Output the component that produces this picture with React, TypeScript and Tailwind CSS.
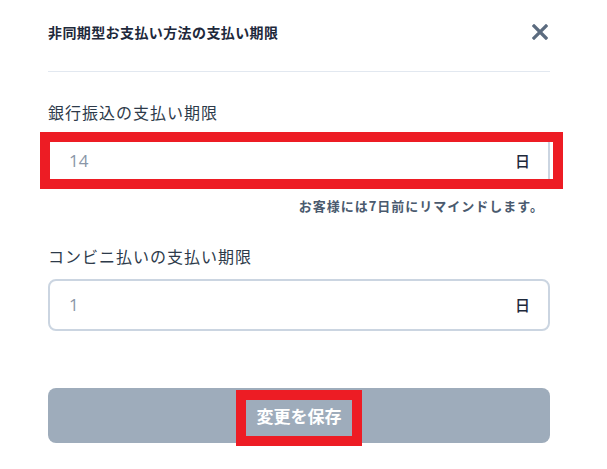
const jp = { fontFamily: '"Noto Sans CJK JP", "Noto Sans", sans-serif' };

function DaysField({ value, outlined }: { value: string; outlined?: boolean }) {
  return (
    <div className="relative">
      <div className="flex items-center h-[52px] rounded-lg border-2 border-[#cbd5e1] bg-white pl-[19px] pr-[18px]">
        <input
          readOnly
          defaultValue={value}
          className="flex-1 min-w-0 bg-transparent outline-none text-[17px] text-[#8a97a8]"
          style={{ fontFamily: '"Open Sans", "Noto Sans", sans-serif' }}
        />
        <span className="text-[15px] leading-5 font-medium text-[#1e293b]">日</span>
      </div>
      {outlined && (
        <div className="absolute -left-2 -top-[3px] -right-[13px] -bottom-[2px] border-[10px] border-[#ed1c24] pointer-events-none" />
      )}
    </div>
  );
}

export default function App() {
  return (
    <div className="w-[607px] h-[469px] bg-white" style={jp}>
      <div className="ml-12 w-[502px]">
        {/* Header */}
        <div className="flex items-center justify-between pt-[22px]">
          <h2 className="text-[14px] leading-5 font-bold tracking-[0.4px] text-[#1e293b]">
            非同期型お支払い方法の支払い期限
          </h2>
          <button className="mr-[2px]">
            <svg width="16" height="16" viewBox="0 0 16 16">
              <path d="M2 2 L14 14 M14 2 L2 14" stroke="#5b6b7f" strokeWidth="3.2" strokeLinecap="square" />
            </svg>
          </button>
        </div>
        <div className="mt-[29px] border-t border-[#e2e8f0]" />

        {/* Bank transfer */}
        <label className="block mt-[28px] text-[16px] leading-6 tracking-[1px] text-[#2d3a4a]">
          銀行振込の支払い期限
        </label>
        <div className="mt-[11px]">
          <DaysField value="14" outlined />
        </div>
        <p className="mt-[10px] text-right pr-[6px] text-[13px] leading-[18px] font-bold tracking-[1px] text-[#4a5a6e]">
          お客様には7日前にリマインドします。
        </p>

        {/* Convenience store */}
        <label className="block mt-[29px] text-[16px] leading-6 tracking-[1px] text-[#2d3a4a]">
          コンビニ払いの支払い期限
        </label>
        <div className="mt-[11px]">
          <DaysField value="1" />
        </div>

        {/* Save */}
        <div className="relative mt-[57px]">
          <button className="w-full h-[55px] rounded-lg bg-[#9eacbb] text-white text-[17px] font-bold tracking-[0px]">
            変更を保存
          </button>
          <div className="absolute left-1/2 -translate-x-1/2 top-[2px] w-[126px] h-[56px] border-[10px] border-[#ed1c24] pointer-events-none" />
        </div>
      </div>
    </div>
  );
}
